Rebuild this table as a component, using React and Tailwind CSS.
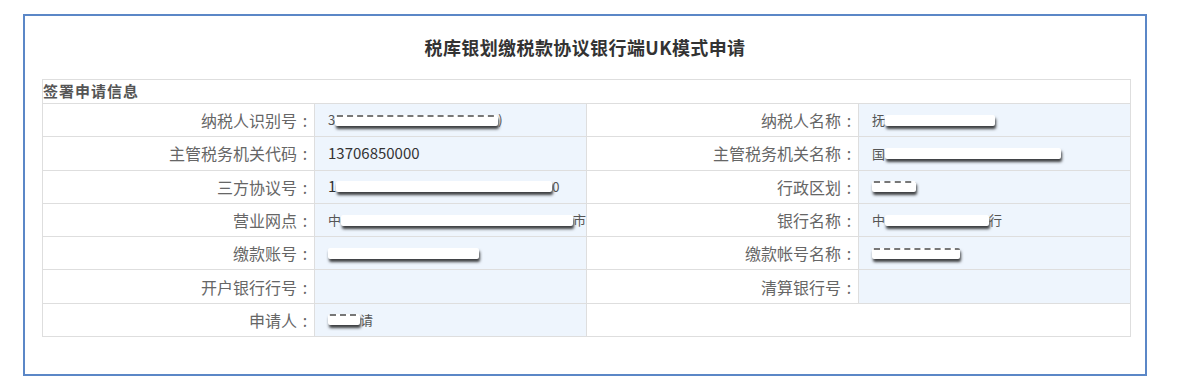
import React from "react";

const FONT = { fontFamily: '"Noto Sans CJK SC", "Noto Sans", sans-serif' };

// White masking bar laid over sensitive values
function Mask({ w, dashed }) {
  return (
    <span
      className={
        "inline-block h-[11px] bg-white rounded-[2px] shadow-[1px_3px_3px_rgba(0,0,0,0.75)] align-middle " +
        (dashed ? "border-t-2 border-dashed border-[#777]" : "")
      }
      style={{ width: w }}
    />
  );
}

function Frag({ children }) {
  return <span className="text-[#555] text-[13px] align-middle">{children}</span>;
}

function Label({ children }) {
  return (
    <div className="h-full flex items-center justify-end pr-[1px] bg-white border-r border-b border-[#dedede] text-[16px] text-[#666]">
      <span>{children}</span>
      <span className="w-[16px] text-center">:</span>
    </div>
  );
}

function Value({ children, blank }) {
  return (
    <div
      className={
        "h-full flex items-center pl-[13px] border-r border-b border-[#dedede] text-[15px] text-[#333] whitespace-nowrap overflow-hidden " +
        (blank ? "bg-white" : "bg-[#eef5fd]")
      }
    >
      {children}
    </div>
  );
}

export default function App() {
  return (
    <div className="w-[1177px] h-[390px] bg-white" style={FONT}>
      <div className="pt-[14px] pl-[23px]">
        <div className="w-[1124px] h-[362px] border-2 border-[#5b87c7] flex flex-col">
          <div className="h-[63px] flex items-center justify-center text-[18px] tracking-[0.4px] font-bold text-[#333]">
            税库银划缴税款协议银行端UK模式申请
          </div>
          <div className="pl-[17px] pr-[14px]">
            <div className="border-t border-l border-[#dedede]">
              <div className="h-[24px] flex items-center border-r border-b border-[#dedede] text-[15px] tracking-[1px] font-bold text-[#555]">
                签署申请信息
              </div>
              <div className="grid grid-cols-4 auto-rows-[33.3px]">
                <Label>纳税人识别号</Label>
                <Value>
                  <Frag>3</Frag>
                  <Mask w={163} dashed />
                  <Frag>)</Frag>
                </Value>
                <Label>纳税人名称</Label>
                <Value>
                  <Frag>抚</Frag>
                  <Mask w={110} />
                </Value>

                <Label>主管税务机关代码</Label>
                <Value>13706850000</Value>
                <Label>主管税务机关名称</Label>
                <Value>
                  <Frag>国</Frag>
                  <Mask w={176} />
                </Value>

                <Label>三方协议号</Label>
                <Value>
                  <span className="align-middle">1</span>
                  <Mask w={216} />
                  <Frag>0</Frag>
                </Value>
                <Label>行政区划</Label>
                <Value>
                  <Mask w={44} dashed />
                </Value>

                <Label>营业网点</Label>
                <Value>
                  <Frag>中</Frag>
                  <Mask w={244} />
                  <Frag>市</Frag>
                </Value>
                <Label>银行名称</Label>
                <Value>
                  <Frag>中</Frag>
                  <Mask w={104} />
                  <Frag>行</Frag>
                </Value>

                <Label>缴款账号</Label>
                <Value>
                  <Mask w={151} />
                </Value>
                <Label>缴款帐号名称</Label>
                <Value>
                  <Mask w={88} dashed />
                </Value>

                <Label>开户银行行号</Label>
                <Value />
                <Label>清算银行号</Label>
                <Value />

                <Label>申请人</Label>
                <Value>
                  <Mask w={32} dashed />
                  <Frag>请</Frag>
                </Value>
                <div className="col-span-2 bg-white border-r border-b border-[#dedede]" />
              </div>
            </div>
          </div>
        </div>
      </div>
    </div>
  );
}
